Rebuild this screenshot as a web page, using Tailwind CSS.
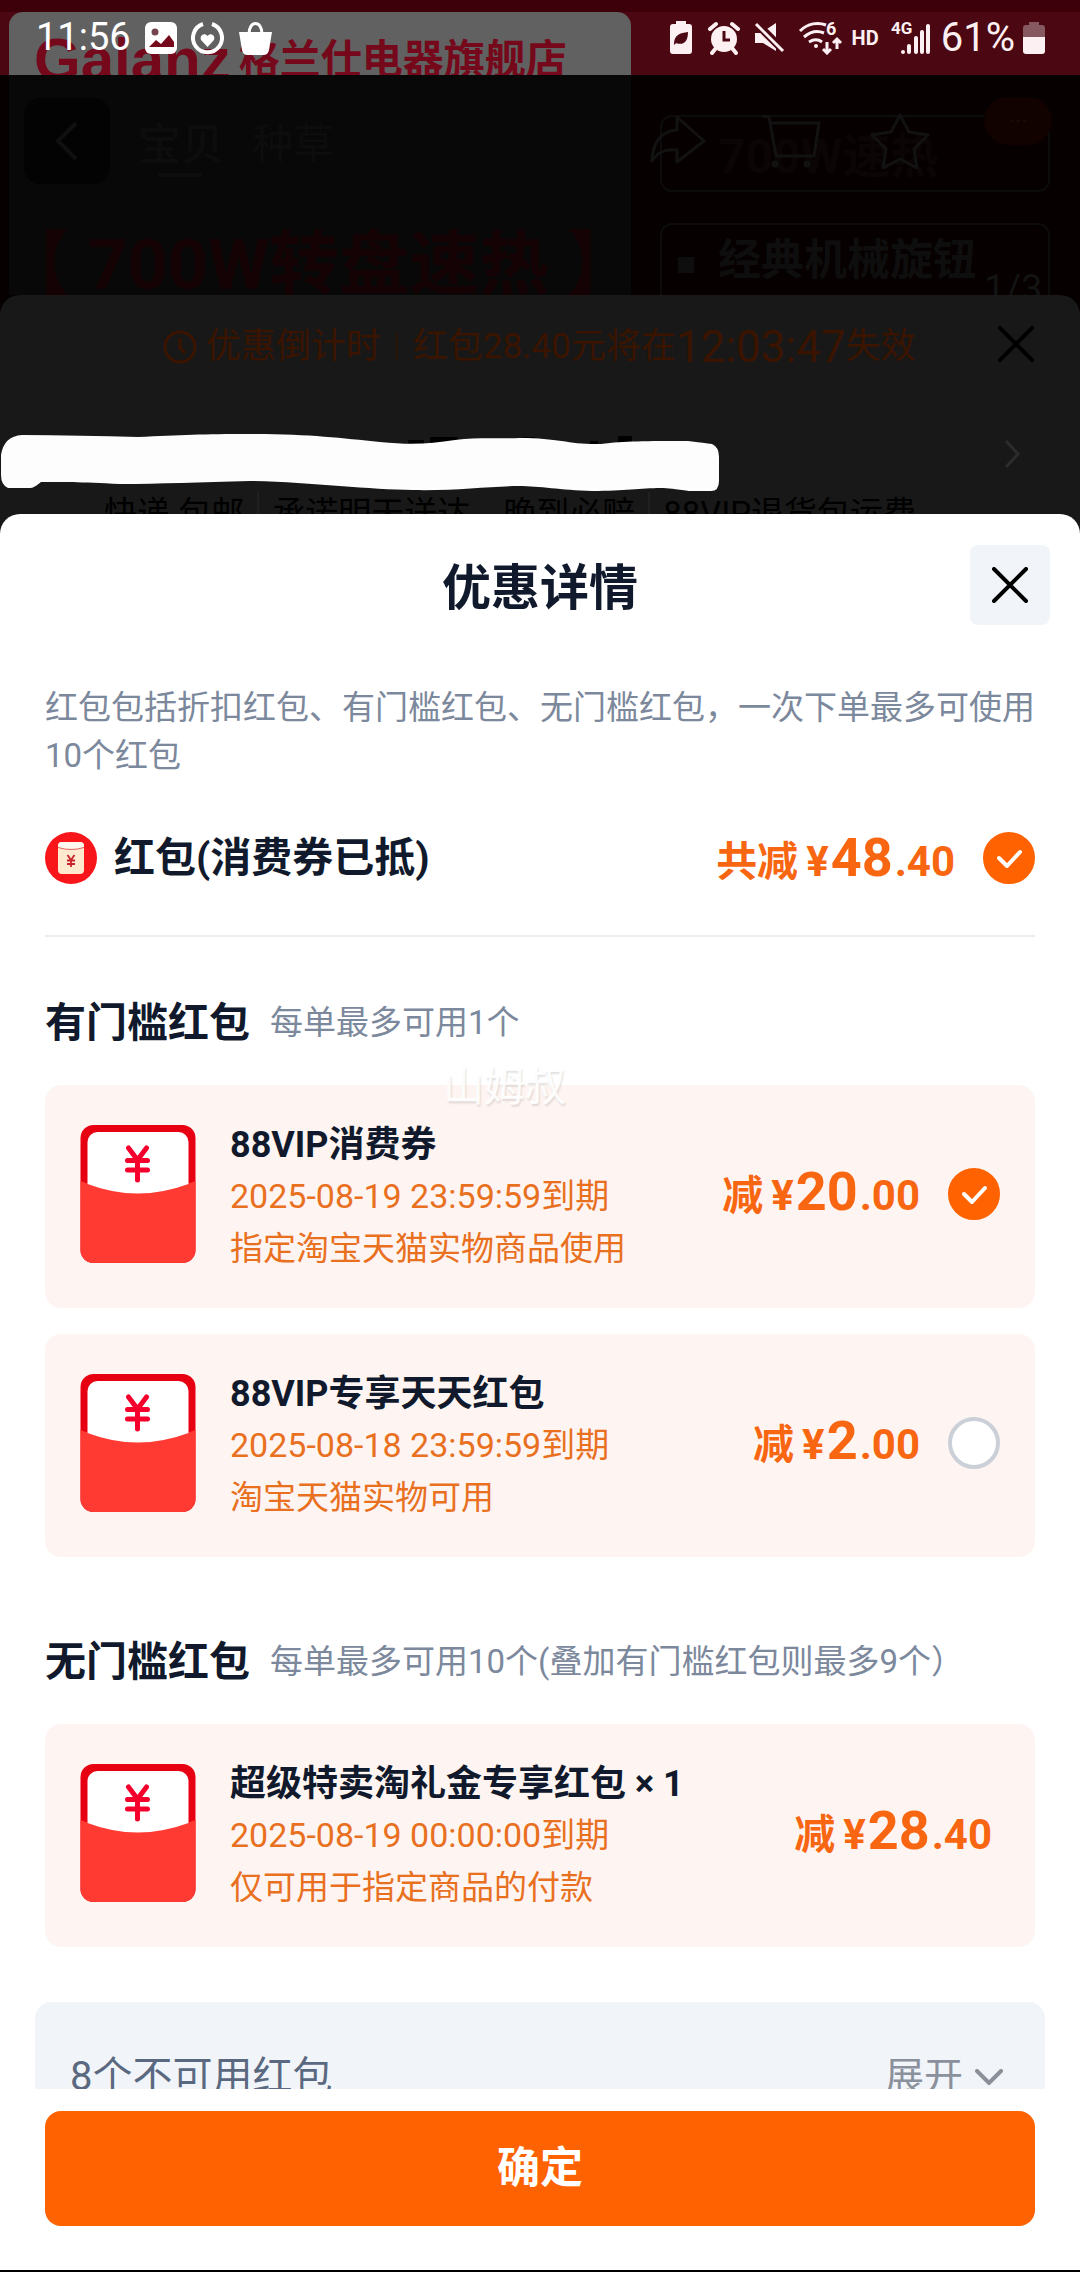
<!DOCTYPE html>
<html lang="zh-CN">
<head>
<meta charset="utf-8">
<meta name="viewport" content="width=device-width, initial-scale=1">
<title>优惠详情</title>
<script src="https://cdn.jsdelivr.net/npm/@tailwindcss/browser@4"></script>
</head>
<body class="bg-[#181818] font-[Roboto,'Noto_Sans_CJK_SC',sans-serif]">
<!-- Shared symbols -->
<svg class="hidden" aria-hidden="true">
  <symbol id="envelope" viewBox="0 0 115 138">
    <rect width="115" height="138" rx="13" fill="#e60012"/>
    <path d="M0 56Q57 80 115 56V125a13 13 0 0 1-13 13H13a13 13 0 0 1-13-13z" fill="#ff3a33"/>
    <path d="M7 17a10 10 0 0 1 10-10H98a10 10 0 0 1 10 10V59Q57 78 7 59z" fill="#fff"/>
    <path d="M48 23l9 12 9-12M57 35v20M47 35.500h20M47 45h20" fill="none" stroke="#f5002d" stroke-width="5" stroke-linecap="round" stroke-linejoin="round"/>
  </symbol>
  <symbol id="tick" viewBox="0 0 52 52">
    <path d="M16 26l8 8 13-14" fill="none" stroke="#fff" stroke-width="4" stroke-linecap="round" stroke-linejoin="round"/>
  </symbol>
  <symbol id="cross" viewBox="0 0 36 36">
    <path d="M2 2l32 32M34 2L2 34" fill="none" stroke="#000" stroke-width="4" stroke-linecap="round"/>
  </symbol>
</svg>

<div class="flex h-screen flex-col overflow-hidden">

  <!-- Status bar over the product poster -->
  <header class="relative h-[75px] shrink-0 overflow-hidden bg-[#4c0812]">
    <div class="absolute inset-x-0 top-0 h-3 bg-[#3d000a]"></div>
    <div class="absolute top-3 left-[9px] h-20 w-[622px] rounded-t-[14px] bg-[#616161]"></div>
    <div class="absolute top-[32px] left-[34px] flex items-center gap-2 leading-[56px] font-bold whitespace-nowrap text-[#75081a]">
      <span class="font-['Liberation_Sans'] text-[60px]">Galanz</span>
      <span class="text-[41px]">格兰仕电器旗舰店</span>
    </div>
    <div class="relative flex h-full items-center pt-[22px] pr-[35px] pb-[22px] pl-[36px] text-[#fdf0f2]">
      <span class="w-[109px] text-[38px] text-white">11:56</span>
      <svg class="h-[34px] w-[128px]" viewBox="0 0 128 34">
        <rect y="1" width="32" height="32" rx="6" fill="#fff"/>
        <circle cx="10" cy="11" r="3.500" fill="#75444c"/>
        <path d="M4 26l7-7 5 4 8-9 5 7v5z" fill="#75081a"/>
        <path d="M58 3a14.500 14.500 0 1 0 9 0" fill="none" stroke="#fff" stroke-width="4"/>
        <path d="M62.500 26l-6-6.500c-3-4 2.500-9 6-4.500 3.500-4.500 9 .5 6 4.500z" fill="#fff"/>
        <path d="M94 11h33l-3 18a6 6 0 0 1-6 5h-15a6 6 0 0 1-6-5z" fill="#fff"/>
        <path d="M104 13c0-14 13-14 13 0" fill="none" stroke="#fff" stroke-width="3"/>
      </svg>
      <svg class="ml-auto h-[34px] w-[176px]" viewBox="0 0 176 34" fill="currentColor">
        <path d="M6 0h10v3h3a3 3 0 0 1 3 3v24a3 3 0 0 1-3 3H3a3 3 0 0 1-3-3V6a3 3 0 0 1 3-3h3z"/>
        <path d="M4 23c0-9 6-11 14-12 0 9-4 14-12 11l7-6-9 8z" fill="#4c0812"/>
        <circle cx="54" cy="18" r="13"/>
        <path d="M40 8l6-5M68 8l-6-5M46 27l-4 5M62 27l4 5" stroke="currentColor" stroke-width="4" stroke-linecap="round"/>
        <path d="M54 10v9h6" fill="none" stroke="#4c0812" stroke-width="3"/>
        <path d="M85 12h6l15-10v28l-13-8h-8z"/>
        <path d="M85 1l28 28" stroke="#4c0812" stroke-width="8"/>
        <path d="M86 3l27 27" stroke="currentColor" stroke-width="3"/>
        <path d="M130 10c8-8 18-9 26-6M134 16c7-6 13-7 20-4M139 21c5-3 9-3 13 0" fill="none" stroke="currentColor" stroke-width="3"/>
        <circle cx="146" cy="25" r="2"/>
        <text x="156" y="14" font-size="18" font-weight="700">6</text>
        <path d="M157 21v10M153 28l4 4 4-4M167 28V18M163 22l4-4 4 4" fill="none" stroke="currentColor" stroke-width="3"/>
      </svg>
      <span class="ml-1.5 text-xl font-bold">HD</span>
      <svg class="ml-3 h-[34px] w-[40px]" viewBox="0 0 40 34" fill="currentColor">
        <text x="0" y="13" font-size="17" font-weight="700">4G</text>
        <path d="M12 31v.1M18 31v-6M25 31V17M31 31V11M37 31V5" stroke="currentColor" stroke-width="4" stroke-linecap="round"/>
      </svg>
      <span class="ml-2.5 text-[40px]">61%</span>
      <svg class="ml-2 h-[32px] w-[22px]" viewBox="0 0 22 32">
        <path d="M6 0h10v3h3a3 3 0 0 1 3 3v10H0V6a3 3 0 0 1 3-3h3z" fill="#865860"/>
        <path d="M0 15h22v14a3 3 0 0 1-3 3H3a3 3 0 0 1-3-3z" fill="currentColor"/>
      </svg>
    </div>
  </header>

  <!-- Dimmed product page -->
  <section class="relative h-[220px] shrink-0 overflow-hidden bg-[#060000]">
    <div class="absolute inset-y-0 left-[9px] w-[622px] bg-[#080808]"></div>
    <div class="absolute top-[150px] left-0 text-[70px] leading-[80px] font-bold whitespace-nowrap text-[#150204]">【 700W转盘速热 】</div>
    <div class="absolute top-10 left-[660px] h-[77px] w-[390px] rounded-xl border-2 border-[#0c0c0c] pl-14 text-[48px] leading-[80px] font-bold text-[#0b0505]">700W速热</div>
    <div class="absolute top-[148px] left-[660px] flex h-[90px] w-[390px] items-start gap-6 rounded-xl border-2 border-[#0c0c0c] pl-4">
      <span class="mt-8 size-4 bg-[#0e0e0e]"></span>
      <span class="text-[43px] leading-[70px] font-bold text-[#0e0e0e]">经典机械旋钮</span>
    </div>
    <span class="absolute top-[192px] left-[984px] text-[38px] leading-[44px] text-[#131313]">1/3</span>
    <nav class="relative flex items-center pt-[22px] pr-7 pl-6">
      <button class="flex size-[86px] items-center justify-center rounded-2xl bg-[#030303]" aria-label="返回">
        <svg class="h-10 w-6" viewBox="0 0 24 40"><path d="M21 2L3 20l18 18" fill="none" stroke="#101010" stroke-width="4"/></svg>
      </button>
      <a href="#" class="relative ml-7 pt-2 text-[43px] font-medium text-[#0d0d0d]">宝贝<span class="absolute bottom-0 left-5 h-1 w-11 bg-[#0d0d0d]"></span></a>
      <a href="#" class="ml-7 pt-2 text-[41px] text-[#0d0d0d]">种草</a>
      <svg class="ml-auto h-[56px] w-[280px]" viewBox="0 0 280 56" fill="none" stroke="#121212" stroke-width="3" stroke-linejoin="round">
        <path d="M27 4l27 24-27 21V37C15 36 8 39 2 48 3 28 12 18 27 17z"/>
        <path d="M112 3l7 1 7 39h38l5-33h-48"/><circle cx="125" cy="51" r="2"/><circle cx="157" cy="51" r="2"/>
        <path d="M250 2l9 17 19 3-14 14 3 19-17-9-17 9 3-19-14-14 19-3z"/>
      </svg>
      <span class="mb-10 ml-[54px] h-12 w-[68px] rounded-full bg-[#110200] text-center text-2xl leading-[48px] text-[#200a04]">···</span>
    </nav>
  </section>

  <!-- Order panel behind the sheet -->
  <section class="relative h-[219px] shrink-0 bg-[#060000]">
    <div class="h-full overflow-hidden rounded-t-[20px] bg-[#181818]">
      <div class="flex h-[98px] items-center pr-[46px] pl-[163px] whitespace-nowrap">
        <div class="flex items-center pt-1.5 text-[35px] text-[#3b1400]">
          <svg class="mr-2 size-[35px]" viewBox="0 0 35 35" fill="none" stroke="currentColor" stroke-width="3"><circle cx="17" cy="17" r="15"/><path d="M17 8v10l5 5"/></svg>
          <span>优惠倒计时</span>
          <span class="mx-[15px] h-7 w-0.5 bg-[#2a1408]"></span>
          <span class="flex items-center">红包28.40元将在<span class="text-[44px]">12:03:47</span>失效</span>
        </div>
        <button class="ml-auto size-9" aria-label="关闭"><svg class="size-9"><use href="#cross"/></svg></button>
      </div>
      <div class="flex h-[99px] items-center justify-end pt-[22px] pr-[60px]">
        <svg class="h-7 w-4" viewBox="0 0 16 28"><path d="M2 1l12 13L2 27" fill="none" stroke="#2c2c2c" stroke-width="3"/></svg>
      </div>
      <p class="flex gap-[13px] pl-[104px] text-[33px] leading-[44px] whitespace-nowrap text-black">
        <span>快递 包邮</span><span class="w-0.5 bg-[#202020]"></span><span>承诺明天送达，晚到必赔</span><span class="w-0.5 bg-[#202020]"></span><span>88VIP退货包运费</span>
      </p>
    </div>
    <svg class="absolute top-[136px] left-0 h-[62px] w-[720px]" viewBox="0 0 720 62">
      <path d="M408 9h16v8h-16zM430 6h28v9h-28zM523 6h12v9h-12zM590 10h8v8h-8zM618 5h14v10h-14z" fill="#000"/>
      <path d="M22 4C60 4 100 5 138 6C180 4 205 3 248 3C310 3 340 7 380 11C410 14 430 13 455 9C480 6 500 8 520 7C560 7 570 14 601 13C625 10 645 10 688 10Q705 12 712 13Q719 16 719 26V50Q719 60 711 60H689C675 58 668 57 661 57C640 57 625 60 592 60C560 59 540 55 519 55C490 55 455 60 413 59C370 59 310 51 250 50C200 51 160 53 120 53C80 51 60 51 41 51Q34 57 30 57H8Q1 54 1 44V24Q4 5 22 4z" fill="#fdfdfd"/>
    </svg>
  </section>

  <!-- Discount detail sheet -->
  <main class="relative flex min-h-0 flex-1 flex-col rounded-t-[20px] bg-white">
    <div class="grid shrink-0 grid-cols-[80px_1fr_80px] items-center px-[30px] pt-[31px]">
      <h1 class="col-start-2 pt-2 text-center text-[49px] leading-[72px] font-bold text-[#111a2c]">优惠详情</h1>
      <button class="flex size-20 items-center justify-center rounded-lg bg-[#f1f5f9]" aria-label="关闭"><svg class="size-9"><use href="#cross"/></svg></button>
    </div>

    <div class="relative min-h-0 flex-1 overflow-hidden px-[45px] pt-[59px]">
      <p class="text-[33px] leading-[48px] text-[#7c889c]">红包包括折扣红包、有门槛红包、无门槛红包，一次下单最多可使用10个红包</p>

      <label class="mt-[52px] flex h-[105px] items-start border-b-2 border-[#ebedf0]">
        <svg class="size-[52px]" viewBox="0 0 52 52">
          <circle cx="26" cy="26" r="26" fill="#f8161b"/>
          <rect x="13" y="10" width="26" height="32" rx="4" fill="#ffe9cf"/>
          <path d="M13 14q0-4 4-4h18q4 0 4 4v1q-13 5-26 0z" fill="#fff8ee"/>
          <path d="M13 15.500q13 4 26 0" fill="none" stroke="#e8605a" stroke-width="1"/>
          <path d="M22.500 23l3.500 5 3.500-5M26 28v7M22 28.500h8M22 32h8" fill="none" stroke="#c8232c" stroke-width="1.800"/>
        </svg>
        <span class="ml-[17px] text-[41px] leading-[52px] font-bold text-[#111a2c]">红包(消费券已抵)</span>
        <span class="ml-auto flex items-baseline text-[42px] leading-[52px] font-bold text-[#f96611]"><span class="mr-2 text-[41px]">共减</span>¥<span class="mr-0.5 ml-0.5 text-[54px]">48</span>.40</span>
        <span class="relative ml-7 size-[52px]">
          <input type="checkbox" checked class="block size-[52px] appearance-none rounded-full border-4 border-[#cbd0d8] bg-white checked:border-[#ff6200] checked:bg-[#ff6200]">
          <svg class="absolute inset-0 size-[52px]"><use href="#tick"/></svg>
        </span>
      </label>

      <h2 class="mt-[56px] flex items-center gap-5 leading-[60px]"><span class="text-[41px] font-bold text-[#111a2c]">有门槛红包</span><span class="text-[33px] font-normal text-[#7c889c]">每单最多可用1个</span></h2>

      <div class="mt-8 flex flex-col gap-[26px]">
        <label class="flex min-h-[223px] items-center rounded-2xl bg-[#fef5f2] px-[35px] pb-1.5">
          <svg class="h-[138px] w-[116px]"><use href="#envelope"/></svg>
          <span class="ml-[34px] flex flex-col pt-2 text-[33px] leading-[54px] text-[#e8701f]">
            <span class="text-[36px] leading-[50px] font-bold text-[#111a2c]">88VIP消费券</span>
            <span class="text-[34px] leading-[52px]">2025-08-19 23:59:59到期</span>
            <span>指定淘宝天猫实物商品使用</span>
          </span>
          <span class="ml-auto flex items-baseline text-[42px] leading-[52px] font-bold text-[#f96611]"><span class="mr-2 text-[41px]">减</span>¥<span class="mr-0.5 ml-0.5 text-[54px]">20</span>.00</span>
          <span class="relative ml-7 size-[52px]">
            <input type="checkbox" checked class="block size-[52px] appearance-none rounded-full border-4 border-[#cbd0d8] bg-white checked:border-[#ff6200] checked:bg-[#ff6200]">
            <svg class="absolute inset-0 size-[52px]"><use href="#tick"/></svg>
          </span>
        </label>

        <label class="flex min-h-[223px] items-center rounded-2xl bg-[#fef5f2] px-[35px] pb-1.5">
          <svg class="h-[138px] w-[116px]"><use href="#envelope"/></svg>
          <span class="ml-[34px] flex flex-col pt-2 text-[33px] leading-[54px] text-[#e8701f]">
            <span class="text-[36px] leading-[50px] font-bold text-[#111a2c]">88VIP专享天天红包</span>
            <span class="text-[34px] leading-[52px]">2025-08-18 23:59:59到期</span>
            <span>淘宝天猫实物可用</span>
          </span>
          <span class="ml-auto flex items-baseline text-[42px] leading-[52px] font-bold text-[#f96611]"><span class="mr-2 text-[41px]">减</span>¥<span class="mr-0.5 ml-0.5 text-[54px]">2</span>.00</span>
          <input type="checkbox" class="ml-7 block size-[52px] appearance-none rounded-full border-4 border-[#cbd0d8] bg-white checked:border-[#ff6200] checked:bg-[#ff6200]">
        </label>
      </div>

      <h2 class="mt-[75px] flex items-center gap-5 leading-[60px]"><span class="text-[41px] font-bold text-[#111a2c]">无门槛红包</span><span class="text-[33px] font-normal text-[#7c889c]">每单最多可用10个(叠加有门槛红包则最多9个）</span></h2>

      <div class="mt-8 flex min-h-[223px] items-center rounded-2xl bg-[#fef5f2] px-[35px] pb-1.5">
        <svg class="h-[138px] w-[116px]"><use href="#envelope"/></svg>
        <div class="ml-[34px] flex flex-col pt-2 text-[33px] leading-[54px] text-[#e8701f]">
          <span class="text-[36px] leading-[50px] font-bold text-[#111a2c]">超级特卖淘礼金专享红包 × 1</span>
          <span class="text-[34px] leading-[52px]">2025-08-19 00:00:00到期</span>
          <span>仅可用于指定商品的付款</span>
        </div>
        <span class="mr-2 ml-auto flex items-baseline text-[42px] leading-[52px] font-bold text-[#f96611]"><span class="mr-2 text-[41px]">减</span>¥<span class="mr-0.5 ml-0.5 text-[54px]">28</span>.40</span>
      </div>

      <div class="-mx-2.5 mt-[55px] flex h-[150px] items-center justify-between rounded-2xl bg-[#f1f5f9] pr-[42px] pl-[35px]">
        <span class="text-[40px] text-[#5b6980]">8个不可用红包</span>
        <button class="flex items-center gap-3 text-[39px] text-[#8b919c]">展开<svg class="h-4 w-7" viewBox="0 0 28 16"><path d="M2 2l12 12L26 2" fill="none" stroke="#8b8f99" stroke-width="4" stroke-linecap="round"/></svg></button>
      </div>

      <span class="pointer-events-none absolute top-[436px] left-1/2 -ml-[97px] text-[41px] leading-[52px] text-white/90 [text-shadow:1px_2px_2px_rgb(0_0_0/0.12)]">山姆叔</span>
    </div>

    <footer class="shrink-0 border-b-2 border-black bg-white px-[45px] pt-[22px] pb-11">
      <button class="h-[115px] w-full rounded-2xl bg-[#ff6200] text-[43px] font-bold text-white">确定</button>
    </footer>
  </main>
</div>
</body>
</html>
